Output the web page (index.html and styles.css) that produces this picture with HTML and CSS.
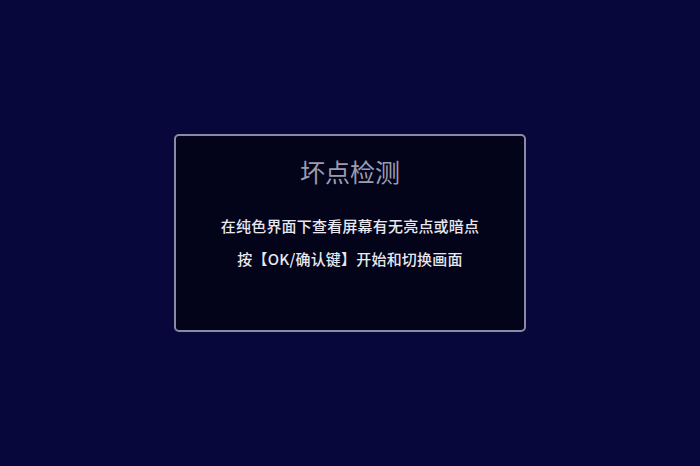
FILE: index.html
```html
<!DOCTYPE html>
<html lang="zh-CN">

<head>
    <meta charset="UTF-8">
    <meta name="viewport" content="width=device-width, initial-scale=1.0">
    <title>坏点检测</title>
    <link rel="stylesheet" href="styles.css">
</head>

<body>

    <div class="panel">
        <h1 class="title">坏点检测</h1>
        <p class="tip">在纯色界面下查看屏幕有无亮点或暗点</p>
        <p class="tip">按【OK/确认键】开始和切换画面</p>
    </div>

</body>

</html>
```

FILE: styles.css
```css
body {
    font-family: "Noto Sans CJK SC", "Noto Sans", sans-serif;
    margin: 0;
    background-color: #07073c;
    color: #e8e8ee;
    display: flex;
    justify-content: center;
    align-items: center;
    height: 100vh;
    overflow: hidden;
}

.panel {
    box-sizing: border-box;
    width: 352px;
    height: 198px;
    background-color: #03031a;
    border: 2px solid #8a8aa6;
    border-radius: 5px;
    text-align: center;
    padding-top: 18px;
}

.title {
    margin: 0 0 27px;
    font-size: 25px;
    font-weight: normal;
    line-height: 34px;
    color: #9c9cae;
}

.tip {
    margin: 0 0 12px;
    font-size: 15px;
    font-weight: 500;
    line-height: 21px;
    letter-spacing: 0.2px;
}
```
